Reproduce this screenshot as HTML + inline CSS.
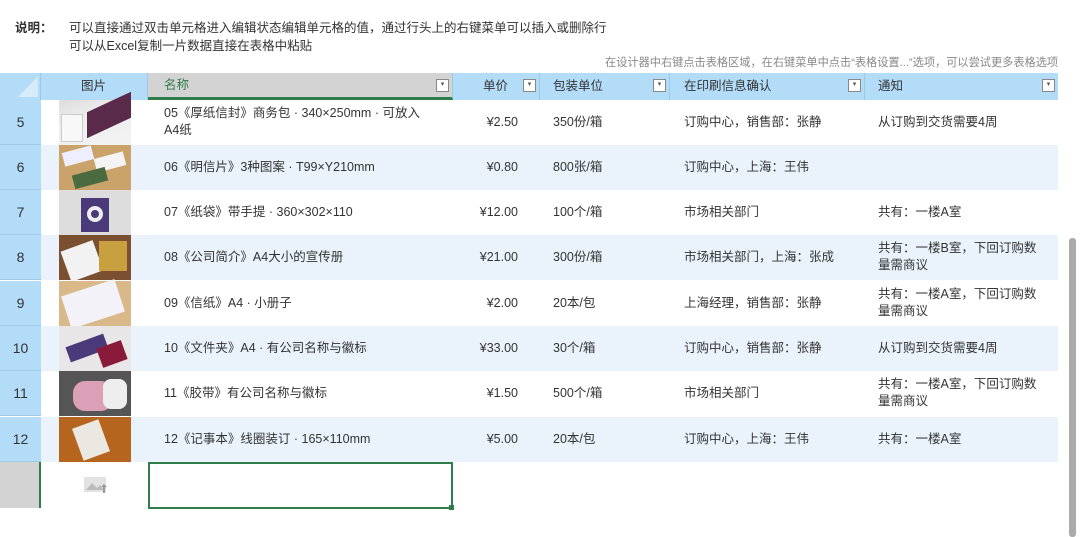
<!DOCTYPE html>
<html><head><meta charset="utf-8"><style>
*{margin:0;padding:0;box-sizing:border-box}
body{width:1080px;height:537px;background:#fff;position:relative;overflow:hidden;font-family:"Liberation Sans","Noto Sans CJK SC",sans-serif;color:#333;font-size:12.5px}
.a{position:absolute}
.t{position:absolute;white-space:nowrap;line-height:17px}
.hd{position:absolute;top:73px;height:27px;background:#b3dcf9;border-right:1px solid #9cc8e6}
.dd{position:absolute;top:6px;width:13px;height:13px;border:1px solid #888;background:#fff;font-size:7px;line-height:10px;text-align:center;color:#555}
.row{position:absolute;left:41px;width:1017px;height:45px}
.rn{position:absolute;left:0;width:41px;height:45px;background:#b3dcf9;border-bottom:1px solid #9cc8e6;font-size:14px;text-align:center;line-height:45px;color:#333}
.img{position:absolute;left:59px;width:72px;height:45px}
</style></head><body>
<div class="t" style="left:15px;top:20px;font-weight:bold">说明：</div>
<div class="t" style="left:69px;top:20px">可以直接通过双击单元格进入编辑状态编辑单元格的值，通过行头上的右键菜单可以插入或删除行</div>
<div class="t" style="left:69px;top:38px">可以从Excel复制一片数据直接在表格中粘贴</div>
<div class="t" style="left:605px;top:55px;font-size:11.2px;color:#888">在设计器中右键点击表格区域，在右键菜单中点击“表格设置...”选项，可以尝试更多表格选项</div>

<div class="hd" style="left:0;width:41px;border-right:1px solid #9cc8e6"><svg class="a" style="left:18px;top:3px" width="20" height="21"><polygon points="20,0 20,21 0,21" fill="#d6ecfb"/></svg></div>
<div class="hd" style="left:41px;width:107px"><div class="t" style="left:40px;top:5px">图片</div></div>
<div class="hd" style="left:148px;width:305px;background:#d3d3d3;border-bottom:3px solid #2e7d4a"><div class="t" style="left:16px;top:4px;color:#2e7d4a">名称</div><div class="dd" style="left:288px">▾</div></div>
<div class="hd" style="left:453px;width:87px"><div class="t" style="left:30px;top:5px">单价</div><div class="dd" style="left:70px">▾</div></div>
<div class="hd" style="left:540px;width:130px"><div class="t" style="left:13px;top:5px">包装单位</div><div class="dd" style="left:113px">▾</div></div>
<div class="hd" style="left:670px;width:195px"><div class="t" style="left:14px;top:5px">在印刷信息确认</div><div class="dd" style="left:178px">▾</div></div>
<div class="hd" style="left:865px;width:193px;border-right:none"><div class="t" style="left:13px;top:5px">通知</div><div class="dd" style="left:177px">▾</div></div>

<div class="row" style="top:100px;background:#fff"></div>
<div class="row" style="top:145px;background:#eaf3fb"></div>
<div class="row" style="top:190px;background:#fff"></div>
<div class="row" style="top:235px;background:#eaf3fb"></div>
<div class="row" style="top:281px;background:#fff"></div>
<div class="row" style="top:326px;background:#eaf3fb"></div>
<div class="row" style="top:371px;background:#fff"></div>
<div class="row" style="top:417px;background:#eaf3fb"></div>

<div class="rn" style="top:100px">5</div>
<div class="rn" style="top:145px">6</div>
<div class="rn" style="top:190px">7</div>
<div class="rn" style="top:235px">8</div>
<div class="rn" style="top:281px">9</div>
<div class="rn" style="top:326px">10</div>
<div class="rn" style="top:371px">11</div>
<div class="rn" style="top:417px">12</div>
<div class="a" style="left:0;top:462px;width:41px;height:46px;background:#d3d3d3;border-right:2px solid #2e7d4a"></div>

<div class="img" style="top:100px;background:linear-gradient(160deg,#ddd 0%,#eee 40%,#f3f3f3 100%)"><div class="a" style="left:28px;top:2px;width:44px;height:26px;background:#5a2a4a;transform:skewY(-25deg)"></div><div class="a" style="left:2px;top:14px;width:22px;height:28px;background:#f8f8f8;border:1px solid #ccc"></div></div>
<div class="img" style="top:145px;background:#c9a36a"><div class="a" style="left:4px;top:4px;width:30px;height:14px;background:#eef;transform:rotate(-15deg)"></div><div class="a" style="left:36px;top:10px;width:30px;height:14px;background:#f4f4f4;transform:rotate(-15deg)"></div><div class="a" style="left:14px;top:26px;width:34px;height:14px;background:#4a6a40;transform:rotate(-15deg)"></div></div>
<div class="img" style="top:190px;background:#ddd"><div class="a" style="left:22px;top:8px;width:28px;height:34px;background:#4a3a7a"></div><div class="a" style="left:28px;top:16px;width:16px;height:16px;border:4px solid #eee;border-radius:50%"></div></div>
<div class="img" style="top:235px;background:#7a5030"><div class="a" style="left:6px;top:10px;width:34px;height:32px;background:#f2f2f2;transform:rotate(-20deg)"></div><div class="a" style="left:40px;top:6px;width:28px;height:30px;background:#c8a040"></div></div>
<div class="img" style="top:281px;background:#d9b88a"><div class="a" style="left:6px;top:6px;width:56px;height:34px;background:#f2f2f8;transform:rotate(-18deg)"></div></div>
<div class="img" style="top:326px;background:#e8e6e6"><div class="a" style="left:8px;top:14px;width:40px;height:16px;background:#4a3a7a;transform:rotate(-20deg)"></div><div class="a" style="left:40px;top:18px;width:26px;height:20px;background:#8a1a3a;transform:rotate(-20deg)"></div></div>
<div class="img" style="top:371px;background:#555"><div class="a" style="left:14px;top:10px;width:40px;height:30px;background:#d9a0b8;border-radius:12px"></div><div class="a" style="left:44px;top:8px;width:24px;height:30px;background:#eee;border-radius:8px"></div></div>
<div class="img" style="top:417px;background:#b5651e"><div class="a" style="left:18px;top:6px;width:28px;height:34px;background:#eae8e0;transform:rotate(-20deg)"></div></div>

<div class="t" style="left:164px;top:105px">05《厚纸信封》商务包 · 340×250mm · 可放入</div>
<div class="t" style="left:164px;top:122px">A4纸</div>
<div class="t" style="left:164px;top:159px">06《明信片》3种图案 · T99×Y210mm</div>
<div class="t" style="left:164px;top:204px">07《纸袋》带手提 · 360×302×110</div>
<div class="t" style="left:164px;top:249px">08《公司简介》A4大小的宣传册</div>
<div class="t" style="left:164px;top:295px">09《信纸》A4 · 小册子</div>
<div class="t" style="left:164px;top:340px">10《文件夹》A4 · 有公司名称与徽标</div>
<div class="t" style="left:164px;top:385px">11《胶带》有公司名称与徽标</div>
<div class="t" style="left:164px;top:431px">12《记事本》线圈装订 · 165×110mm</div>

<div class="t" style="right:562px;top:114px">¥2.50</div>
<div class="t" style="right:562px;top:159px">¥0.80</div>
<div class="t" style="right:562px;top:204px">¥12.00</div>
<div class="t" style="right:562px;top:249px">¥21.00</div>
<div class="t" style="right:562px;top:295px">¥2.00</div>
<div class="t" style="right:562px;top:340px">¥33.00</div>
<div class="t" style="right:562px;top:385px">¥1.50</div>
<div class="t" style="right:562px;top:431px">¥5.00</div>

<div class="t" style="left:553px;top:114px">350份/箱</div>
<div class="t" style="left:553px;top:159px">800张/箱</div>
<div class="t" style="left:553px;top:204px">100个/箱</div>
<div class="t" style="left:553px;top:249px">300份/箱</div>
<div class="t" style="left:553px;top:295px">20本/包</div>
<div class="t" style="left:553px;top:340px">30个/箱</div>
<div class="t" style="left:553px;top:385px">500个/箱</div>
<div class="t" style="left:553px;top:431px">20本/包</div>

<div class="t" style="left:684px;top:114px">订购中心，销售部：张静</div>
<div class="t" style="left:684px;top:159px">订购中心，上海：王伟</div>
<div class="t" style="left:684px;top:204px">市场相关部门</div>
<div class="t" style="left:684px;top:249px">市场相关部门，上海：张成</div>
<div class="t" style="left:684px;top:295px">上海经理，销售部：张静</div>
<div class="t" style="left:684px;top:340px">订购中心，销售部：张静</div>
<div class="t" style="left:684px;top:385px">市场相关部门</div>
<div class="t" style="left:684px;top:431px">订购中心，上海：王伟</div>

<div class="t" style="left:878px;top:114px">从订购到交货需要4周</div>
<div class="t" style="left:878px;top:204px">共有：一楼A室</div>
<div class="t" style="left:878px;top:240px">共有：一楼B室，下回订购数</div>
<div class="t" style="left:878px;top:257px">量需商议</div>
<div class="t" style="left:878px;top:286px">共有：一楼A室，下回订购数</div>
<div class="t" style="left:878px;top:303px">量需商议</div>
<div class="t" style="left:878px;top:340px">从订购到交货需要4周</div>
<div class="t" style="left:878px;top:376px">共有：一楼A室，下回订购数</div>
<div class="t" style="left:878px;top:393px">量需商议</div>
<div class="t" style="left:878px;top:431px">共有：一楼A室</div>

<svg class="a" style="left:84px;top:476px" width="24" height="18"><rect x="0" y="1" width="22" height="15" fill="#e2e2e2"/><polygon points="2,14 8,7 13,12 16,9 20,14" fill="#bbb"/><rect x="19" y="10" width="2" height="7" fill="#999"/><polygon points="17,11 20,8 23,11" fill="#999"/></svg>
<div class="a" style="left:148px;top:462px;width:305px;height:47px;border:2px solid #2e7d4a"></div>
<div class="a" style="left:449px;top:505px;width:5px;height:5px;background:#2e7d4a"></div>

<div class="a" style="left:1069px;top:238px;width:7px;height:299px;background:#ababab;border-radius:3px"></div>
</body></html>
